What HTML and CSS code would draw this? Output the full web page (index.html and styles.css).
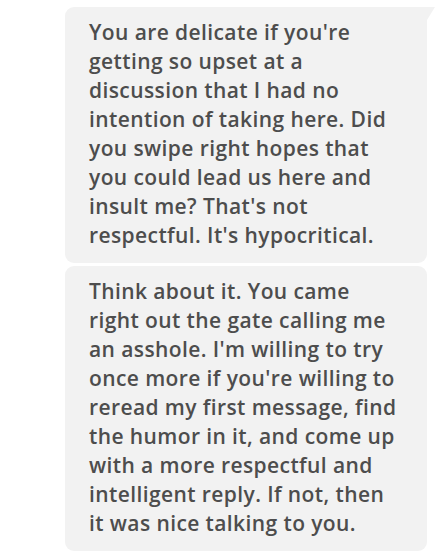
FILE: index.html
```html
<!DOCTYPE html>
<html>
<head>
<meta charset="utf-8">
<link rel="stylesheet" href="styles.css">
</head>
<body>
<div class="thread">
  <div class="bubble bubble-tail">You are delicate if you're<br>getting so upset at a<br>discussion that I had no<br>intention of taking here. Did<br>you swipe right hopes that<br>you could lead us here and<br>insult me? That's not<br>respectful. It's hypocritical.</div>
  <div class="bubble">Think about it. You came<br>right out the gate calling me<br>an asshole. I'm willing to try<br>once more if you're willing to<br>reread my first message, find<br>the humor in it, and come up<br>with a more respectful and<br>intelligent reply. If not, then<br>it was nice talking to you.</div>
  <div class="meta">Sent 3:47 PM</div>
</div>
</body>
</html>
```

FILE: styles.css
```css
html, body {
  margin: 0;
  padding: 0;
  background: #ffffff;
}
body {
  width: 446px;
  height: 559px;
  overflow: hidden;
}
.thread {
  display: flex;
  flex-direction: column;
  gap: 3px;
  padding: 7px 19px 0 65px;
}
.bubble {
  position: relative;
  background: #f2f2f2;
  border-radius: 9px;
  padding: 11px 10px 13px 24px;
  font-family: "Open Sans", "Liberation Sans", sans-serif;
  font-weight: 600;
  font-size: 21px;
  line-height: 29px;
  letter-spacing: 0.4px;
  color: #4d4d4d;
  white-space: nowrap;
}
.bubble-tail {
  border-top-right-radius: 0;
}
.bubble-tail::after {
  content: "";
  position: absolute;
  top: 0;
  right: -8px;
  width: 0;
  height: 0;
  border-top: 13px solid #f2f2f2;
  border-right: 8px solid transparent;
}
.meta {
  align-self: flex-end;
  margin-right: 60px;
  margin-top: 3px;
  font-family: "Open Sans", "Liberation Sans", sans-serif;
  font-size: 14px;
  line-height: 18px;
  color: #b0b0b0;
}
```
